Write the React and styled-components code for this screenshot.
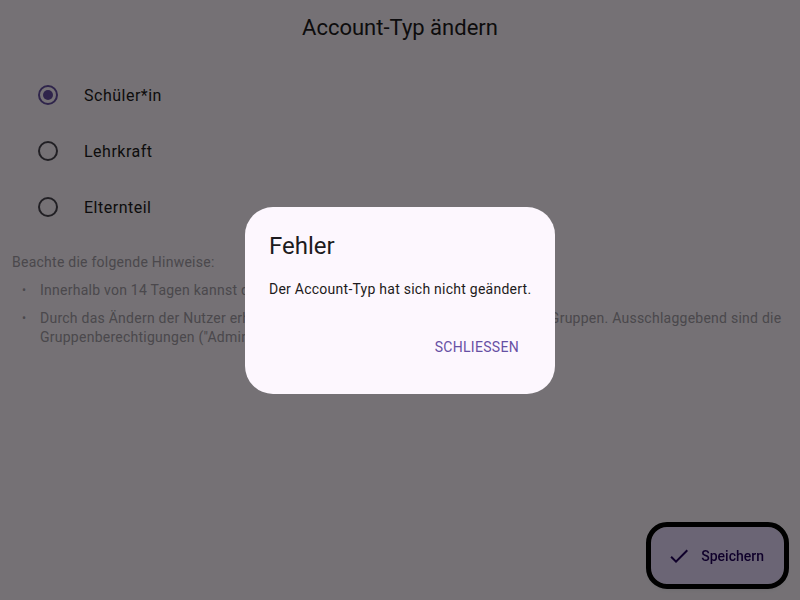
import React from "react";
import styled, { createGlobalStyle } from "styled-components";

const Global = createGlobalStyle`
  html, body { margin: 0; padding: 0; }
  body {
    background: #fef7ff;
    font-family: Roboto, "Noto Sans", Arial, sans-serif;
    color: #1d1b20;
    width: 800px;
    height: 600px;
    overflow: hidden;
  }
`;

const Page = styled.div`
  width: 800px;
  height: 600px;
  display: flex;
  flex-direction: column;
  background: #fef7ff;
`;

const AppBar = styled.header`
  height: 56px;
  display: flex;
  align-items: center;
  justify-content: center;
  font-size: 22px;
  line-height: 28px;
  color: #1d1b20;
`;

const RadioList = styled.div`
  display: flex;
  flex-direction: column;
  padding-top: 11px;
`;

const RadioRow = styled.label`
  height: 56px;
  display: flex;
  align-items: center;
  padding-left: 37px;
  gap: 27px;
  font-size: 16px;
  letter-spacing: 0.5px;
  color: #1d1b20;
`;

const RadioCircle = styled.span`
  width: 20px;
  height: 20px;
  margin-left: 1px;
  margin-right: -1px;
  box-sizing: border-box;
  border-radius: 50%;
  border: 2px solid ${(p) => (p.$checked ? "#6750a4" : "#49454f")};
  display: flex;
  align-items: center;
  justify-content: center;
  &::after {
    content: "";
    width: 10px;
    height: 10px;
    border-radius: 50%;
    background: ${(p) => (p.$checked ? "#6750a4" : "transparent")};
  }
`;

const Hints = styled.section`
  padding: 18px 12px 0 12px;
  color: #a39da6;
  font-size: 14px;
  line-height: 19px;
  letter-spacing: 0.25px;
`;

const HintTitle = styled.div`
  margin-bottom: 9px;
`;

const HintList = styled.ul`
  list-style: none;
  margin: 0;
  padding: 0;
  display: flex;
  flex-direction: column;
  gap: 9px;
`;

const HintItem = styled.li`
  display: flex;
  padding-left: 10px;
  &::before {
    content: "•";
    width: 18px;
    flex: none;
    font-size: 12px;
  }
`;

const Fab = styled.button`
  position: fixed;
  right: 16px;
  bottom: 16px;
  height: 57px;
  display: flex;
  align-items: center;
  gap: 10px;
  padding: 0 20px 0 16px;
  border: none;
  border-radius: 16px;
  background: #eaddff;
  color: #21005d;
  font-family: Roboto, "Noto Sans", Arial, sans-serif;
  font-size: 14px;
  font-weight: 500;
  letter-spacing: 0;
  outline: 5px solid #000;
  outline-offset: 0;
  box-shadow: 0 3px 6px rgba(0, 0, 0, 0.2);
`;

const Scrim = styled.div`
  position: fixed;
  inset: 0;
  background: rgba(0, 0, 0, 0.54);
  display: flex;
  align-items: center;
  justify-content: center;
`;

const Dialog = styled.div`
  width: 310px;
  box-sizing: border-box;
  background: #fdf7fe;
  border-radius: 28px;
  padding: 23px 24px 23px;
  display: flex;
  flex-direction: column;
`;

const DialogTitle = styled.h2`
  margin: 0;
  font-size: 24px;
  font-weight: 400;
  line-height: 32px;
  color: #1d1b20;
`;

const DialogBody = styled.p`
  margin: 17px 0 0;
  font-size: 14px;
  line-height: 20px;
  letter-spacing: 0.25px;
  color: #1d1b20;
  white-space: nowrap;
`;

const Actions = styled.div`
  margin-top: 24px;
  display: flex;
  justify-content: flex-end;
`;

const TextButton = styled.button`
  height: 48px;
  padding: 0 12px;
  border: none;
  background: transparent;
  color: #6750a4;
  font-family: Roboto, "Noto Sans", Arial, sans-serif;
  font-size: 14px;
  font-weight: 400;
  letter-spacing: 0.3px;
  border-radius: 20px;
`;

const CheckIcon = () => (
  <svg width="24" height="24" viewBox="0 0 24 24" fill="currentColor">
    <path d="M9 16.17 4.83 12l-1.42 1.41L9 19 21 7l-1.41-1.41z" />
  </svg>
);

const options = [
  { label: "Schüler*in", checked: true },
  { label: "Lehrkraft", checked: false },
  { label: "Elternteil", checked: false },
];

export default function App() {
  return (
    <>
      <Global />
      <Page>
        <AppBar>Account-Typ ändern</AppBar>
        <RadioList>
          {options.map((o) => (
            <RadioRow key={o.label}>
              <RadioCircle $checked={o.checked} />
              {o.label}
            </RadioRow>
          ))}
        </RadioList>
        <Hints>
          <HintTitle>Beachte die folgende Hinweise:</HintTitle>
          <HintList>
            <HintItem>
              Innerhalb von 14 Tagen kannst du den Account-Typ nur einmal ändern.
            </HintItem>
            <HintItem>
              Durch das Ändern der Nutzer erhältst du keine weiteren Rechte in
              bestehenden Gruppen. Ausschlaggebend sind die Gruppenberechtigungen
              ("Administrator").
            </HintItem>
          </HintList>
        </Hints>
      </Page>
      <Fab>
        <CheckIcon />
        Speichern
      </Fab>
      <Scrim>
        <Dialog>
          <DialogTitle>Fehler</DialogTitle>
          <DialogBody>Der Account-Typ hat sich nicht geändert.</DialogBody>
          <Actions>
            <TextButton>SCHLIESSEN</TextButton>
          </Actions>
        </Dialog>
      </Scrim>
    </>
  );
}
